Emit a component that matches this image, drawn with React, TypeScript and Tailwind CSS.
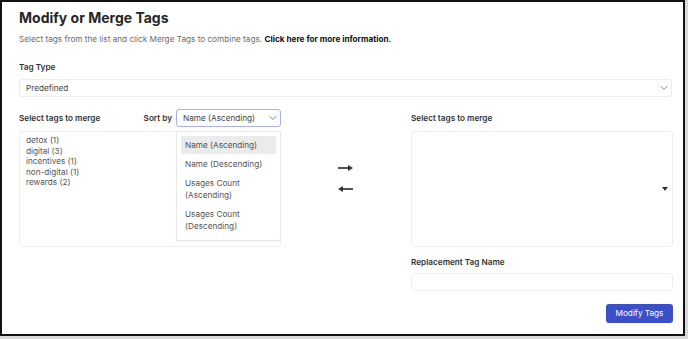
import { ChevronDown } from "lucide-react";

const tags = ["detox (1)", "digital (3)", "incentives (1)", "non-digital (1)", "rewards (2)"];

const sortOptions = [
  { label: "Name (Ascending)", active: true },
  { label: "Name (Descending)" },
  { label: "Usages Count (Ascending)" },
  { label: "Usages Count (Descending)" },
];

function Arrow({ left }: { left?: boolean }) {
  return (
    <svg width="15" height="8" viewBox="0 0 15 8" className={left ? "rotate-180" : ""}>
      <line x1="0" y1="4" x2="11" y2="4" stroke="#333" strokeWidth="1.7" />
      <polygon points="10,1 15,4 10,7" fill="#333" />
    </svg>
  );
}

export default function App() {
  return (
    <div className="w-[688px] h-[339px] bg-[#d9d9d9] font-['Inter',sans-serif]">
      <div className="w-[685px] h-[336px] border-2 border-[#111] bg-white pl-[17px] pr-[11px] pt-[7px]">
        <h1 className="text-[14px] font-bold text-[#262626] leading-[18px]">Modify or Merge Tags</h1>
        <p className="mt-[6px] text-[8.2px] text-[#6b6b6b] leading-[12px]">
          Select tags from the list and click Merge Tags to combine tags.{" "}
          <span className="font-bold text-[#111]">Click here for more information.</span>
        </p>

        <div className="mt-[16px] text-[8.2px] font-semibold text-[#333] leading-[12px]">Tag Type</div>
        <div className="mt-[6px] h-[18px] border border-[#ececec] rounded-[3px] flex items-center justify-between pl-[6px] pr-[1px]">
          <span className="text-[8.2px] text-[#444]">Predefined</span>
          <ChevronDown className="w-[12px] h-[12px] text-[#666]" strokeWidth={1.6} />
        </div>

        <div className="mt-[12px] grid grid-cols-[262px_130px_262px] items-start">
          <div>
            <div className="h-[18px] flex items-center justify-between">
              <span className="text-[8.2px] font-semibold text-[#333]">Select tags to merge</span>
              <div className="flex items-center gap-[4px]">
                <span className="text-[8.2px] font-semibold text-[#333]">Sort by</span>
                <div className="w-[105px] h-[18px] border border-[#a9b2e6] rounded-[3px] flex items-center justify-between pl-[6px] pr-[1px]">
                  <span className="text-[8.2px] text-[#444]">Name (Ascending)</span>
                  <ChevronDown className="w-[12px] h-[12px] text-[#666]" strokeWidth={1.6} />
                </div>
              </div>
            </div>
            <div className="relative mt-[4px] h-[116px] border border-[#efefef] rounded-[3px] px-[6px] py-[3px]">
              {tags.map((t) => (
                <div key={t} className="text-[8.2px] text-[#555] leading-[10.5px]">{t}</div>
              ))}
              <div className="absolute right-[-1px] top-[-1px] w-[105px] h-[110px] bg-white border border-[#e8e8e8] rounded-[2px] shadow-[0_1px_2px_rgba(0,0,0,0.05)] px-[4px] pt-[4px] flex flex-col gap-[1px]">
                {sortOptions.map((o) => (
                  <div
                    key={o.label}
                    className={`px-[4px] py-[3px] rounded-[2px] text-[8.2px] text-[#555] leading-[12px] ${o.active ? "bg-[#ebebeb]" : ""}`}
                  >
                    {o.label}
                  </div>
                ))}
              </div>
            </div>
          </div>

          <div className="flex flex-col items-center gap-[13px] pt-[55px] pr-[2px]">
            <Arrow />
            <Arrow left />
          </div>

          <div>
            <div className="h-[18px] flex items-center">
              <span className="text-[8.2px] font-semibold text-[#333]">Select tags to merge</span>
            </div>
            <div className="mt-[4px] h-[116px] border border-[#efefef] rounded-[3px] flex items-center justify-end pr-[4px]">
              <span className="w-0 h-0 border-l-[3px] border-r-[3px] border-t-[4px] border-l-transparent border-r-transparent border-t-[#333]" />
            </div>
            <div className="mt-[9px] text-[8.2px] font-semibold text-[#333] leading-[12px]">Replacement Tag Name</div>
            <div className="mt-[5px] h-[18px] border border-[#efefef] rounded-[3px]" />
            <div className="mt-[13px] flex justify-end">
              <button className="w-[67px] h-[19px] rounded-[3px] bg-[#3d4fc7] text-white text-[8.2px]">Modify Tags</button>
            </div>
          </div>
        </div>
      </div>
    </div>
  );
}
